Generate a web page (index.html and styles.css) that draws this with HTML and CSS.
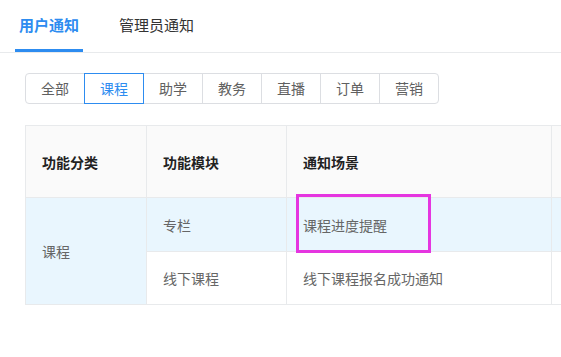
FILE: index.html
```html
<!DOCTYPE html>
<html lang="zh-CN">
<head>
    <meta charset="UTF-8">
    <title>通知设置</title>
    <link rel="stylesheet" href="styles.css">
</head>
<body>
    <!-- Tabs -->
    <div class="tabs">
        <div class="tab active">用户通知</div>
        <div class="tab">管理员通知</div>
    </div>

    <!-- Filter Buttons -->
    <div class="filter">
        <div class="filter-btn">全部</div>
        <div class="filter-btn active">课程</div>
        <div class="filter-btn">助学</div>
        <div class="filter-btn">教务</div>
        <div class="filter-btn">直播</div>
        <div class="filter-btn">订单</div>
        <div class="filter-btn">营销</div>
    </div>

    <!-- Notice Table -->
    <div class="table-wrap">
        <table class="notice-table">
            <colgroup>
                <col class="col-type">
                <col class="col-module">
                <col class="col-scene">
                <col class="col-rest">
            </colgroup>
            <thead>
                <tr>
                    <th>功能分类</th>
                    <th>功能模块</th>
                    <th>通知场景</th>
                    <th></th>
                </tr>
            </thead>
            <tbody>
                <tr class="row-hover row-first">
                    <td rowspan="2" class="cell-type">课程</td>
                    <td>专栏</td>
                    <td>课程进度提醒</td>
                    <td></td>
                </tr>
                <tr class="row-second">
                    <td>线下课程</td>
                    <td>线下课程报名成功通知</td>
                    <td></td>
                </tr>
            </tbody>
        </table>
        <div class="highlight-box"></div>
    </div>
</body>
</html>
```

FILE: styles.css
```css
/* Basic Styling */
body {
    margin: 0;
    font-family: "Noto Sans CJK SC", "Liberation Sans", sans-serif;
    background-color: white;
    color: #666;
}

/* Tabs */
.tabs {
    display: flex;
    gap: 32px;
    height: 52px;
    padding-left: 15px;
    border-bottom: 1px solid #e8eaec;
}

.tab {
    padding: 0 4px;
    line-height: 49px;
    font-size: 15px;
    color: #333;
    border-bottom: 3px solid transparent;
}

.tab.active {
    color: #2d8cf0;
    font-weight: bold;
    border-bottom-color: #2d8cf0;
}

/* Filter buttons */
.filter {
    display: flex;
    margin: 20px 0 0 25px;
}

.filter-btn {
    width: 58px;
    height: 29px;
    line-height: 29px;
    text-align: center;
    font-size: 14px;
    color: #606060;
    border: 1px solid #dcdee2;
    margin-left: -1px;
    position: relative;
}

.filter-btn:first-child {
    margin-left: 0;
    border-radius: 4px 0 0 4px;
}

.filter-btn:last-child {
    border-radius: 0 4px 4px 0;
}

.filter-btn.active {
    color: #2d8cf0;
    border-color: #2d8cf0;
    z-index: 1;
}

/* Table */
.table-wrap {
    position: relative;
    margin: 21px 0 0 25px;
    overflow: hidden;
}

.notice-table {
    width: 740px;
    table-layout: fixed;
    border-collapse: collapse;
    font-size: 14px;
}

.col-type { width: 121px; }
.col-module { width: 140px; }
.col-scene { width: 265px; }
.col-rest { width: 214px; }

.notice-table th,
.notice-table td {
    border: 1px solid #e8eaec;
    padding: 0 16px;
    text-align: left;
}

.notice-table th {
    height: 71px;
    background-color: #fafafa;
    color: #222;
    font-weight: bold;
}

.notice-table td {
    color: #666;
}

.row-first td {
    height: 53px;
}

.row-second td {
    height: 52px;
}

.row-hover td,
.cell-type {
    background-color: #e9f6fe;
}

/* Annotation box */
.highlight-box {
    position: absolute;
    left: 271px;
    top: 69px;
    width: 129px;
    height: 53px;
    border: 3px solid #e535e0;
}
```
